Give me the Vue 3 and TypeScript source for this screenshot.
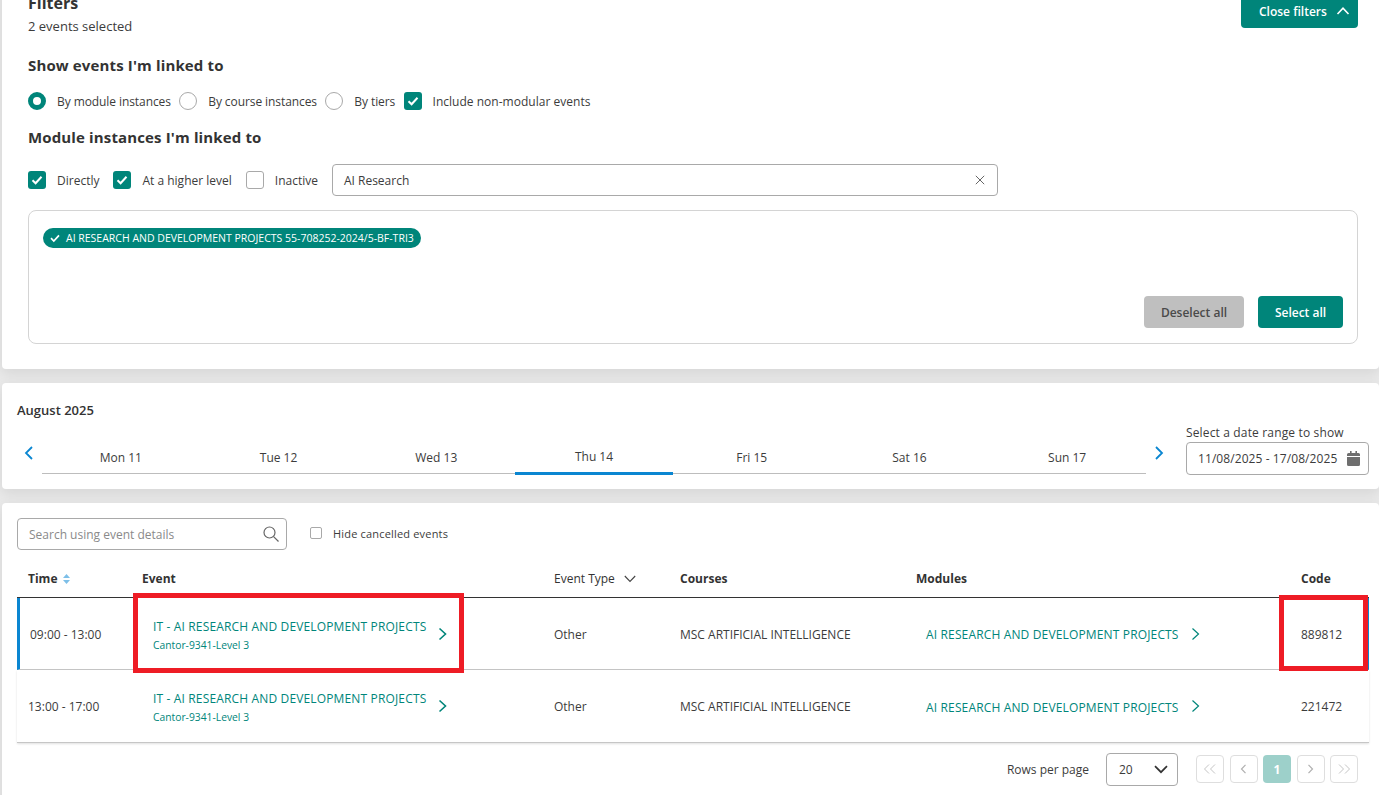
<script setup lang="ts">
interface Row { time: string; code: string; current: boolean }
const days = ['Mon 11', 'Tue 12', 'Wed 13', 'Thu 14', 'Fri 15', 'Sat 16', 'Sun 17']
const rows: Row[] = [
  { time: '09:00 - 13:00', code: '889812', current: true },
  { time: '13:00 - 17:00', code: '221472', current: false },
]
</script>

<template>
  <div class="page">
    <section class="panel filters">
      <div class="filters-head">
        <div>
          <h2 class="title">Filters</h2>
          <div class="count">2 events selected</div>
        </div>
        <button class="btn close-btn">
          Close filters
          <svg width="14" height="14" viewBox="0 0 14 14" fill="none" stroke="#fff" stroke-width="1.6"><path d="M1.5 10 7 4.2 12.5 10" /></svg>
        </button>
      </div>

      <h3 class="sub first">Show events I'm linked to</h3>
      <div class="options options-a">
        <label class="opt"><span class="radio on"></span>By module instances</label>
        <label class="opt"><span class="radio"></span>By course instances</label>
        <label class="opt"><span class="radio"></span>By tiers</label>
        <label class="opt wide">
          <span class="check on"><svg width="12" height="12" viewBox="0 0 12 12" fill="none" stroke="#fff" stroke-width="2"><path d="M1.5 6.2 4.6 9.2 10.5 2.8" /></svg></span>
          Include non-modular events
        </label>
      </div>

      <h3 class="sub second">Module instances I'm linked to</h3>
      <div class="options options-b">
        <label class="opt">
          <span class="check on"><svg width="12" height="12" viewBox="0 0 12 12" fill="none" stroke="#fff" stroke-width="2"><path d="M1.5 6.2 4.6 9.2 10.5 2.8" /></svg></span>
          Directly
        </label>
        <label class="opt">
          <span class="check on"><svg width="12" height="12" viewBox="0 0 12 12" fill="none" stroke="#fff" stroke-width="2"><path d="M1.5 6.2 4.6 9.2 10.5 2.8" /></svg></span>
          At a higher level
        </label>
        <label class="opt"><span class="check"></span>Inactive</label>
        <div class="module-search">
          <span>AI Research</span>
          <svg width="10" height="10" viewBox="0 0 10 10" fill="none" stroke="#666" stroke-width="1"><path d="M.8.8l8.4 8.4M9.2.8.8 9.2" /></svg>
        </div>
      </div>

      <div class="results">
        <div class="chip-row">
          <span class="chip">
            <svg width="10" height="10" viewBox="0 0 10 10" fill="none" stroke="#fff" stroke-width="1.7"><path d="M1 5.2 3.8 8 9 2.4" /></svg>
            AI RESEARCH AND DEVELOPMENT PROJECTS 55-708252-2024/5-BF-TRI3
          </span>
        </div>
        <div class="result-actions">
          <button class="btn muted">Deselect all</button>
          <button class="btn select">Select all</button>
        </div>
      </div>
    </section>

    <section class="panel calendar">
      <div class="month">August 2025</div>
      <div class="strip">
        <svg class="nav-icon" width="10" height="14" viewBox="0 0 10 14" fill="none" stroke="#0a86d1" stroke-width="1.8"><path d="M8 1 2 7l6 6" /></svg>
        <div class="days">
          <div v-for="d in days" :key="d" class="day" :class="{ active: d === 'Thu 14' }">{{ d }}</div>
        </div>
        <svg class="nav-icon next" width="10" height="14" viewBox="0 0 10 14" fill="none" stroke="#0a86d1" stroke-width="1.8"><path d="M2 1l6 6-6 6" /></svg>
        <div class="range">
          <div class="range-label">Select a date range to show</div>
          <div class="range-input">
            <span>11/08/2025 - 17/08/2025</span>
            <svg width="13" height="15" viewBox="0 0 13 15" fill="#6e6e6e"><path d="M3 0h1.6v2h3.8V0H10v2h1.5A1.5 1.5 0 0 1 13 3.5V5H0V3.5A1.5 1.5 0 0 1 1.5 2H3zM0 6h13v7.5a1.5 1.5 0 0 1-1.5 1.5h-10A1.5 1.5 0 0 1 0 13.500z" /></svg>
          </div>
        </div>
      </div>
    </section>

    <section class="panel events">
      <div class="toolbar">
        <div class="search">
          <span>Search using event details</span>
          <svg width="16" height="16" viewBox="0 0 16 16" fill="none" stroke="#666" stroke-width="1.2"><circle cx="6.500" cy="6.500" r="5.500" /><path d="m10.600 10.600 4.900 4.900" /></svg>
        </div>
        <label class="hide"><span class="mini-check"></span>Hide cancelled events</label>
      </div>

      <div class="table">
        <div class="grid head">
          <div class="th">Time
            <svg width="7" height="10" viewBox="0 0 7 10" fill="#7dbfe8"><path d="M3.500 0 7 4H0zM0 6h7l-3.500 4z" /></svg>
          </div>
          <div class="th">Event</div>
          <div class="th light">Event Type
            <svg width="12" height="8" viewBox="0 0 12 8" fill="none" stroke="#444" stroke-width="1.100"><path d="m.8 1 5.200 5.400L11.200 1" /></svg>
          </div>
          <div class="th">Courses</div>
          <div class="th">Modules</div>
          <div class="th">Code</div>
        </div>
        <div v-for="r in rows" :key="r.code" class="grid row" :class="{ current: r.current }">
          <div class="td time">{{ r.time }}</div>
          <div class="td event">
            <div class="event-text">
              <div class="link">IT - AI RESEARCH AND DEVELOPMENT PROJECTS</div>
              <div class="room">Cantor-9341-Level 3</div>
            </div>
            <svg class="chev" width="9" height="14" viewBox="0 0 9 14" fill="none" stroke="#00857a" stroke-width="1.600"><path d="m1.500 1.500 6 5.500-6 5.500" /></svg>
          </div>
          <div class="td plain">Other</div>
          <div class="td plain">MSC ARTIFICIAL INTELLIGENCE</div>
          <div class="td module">
            <span class="link">AI RESEARCH AND DEVELOPMENT PROJECTS</span>
            <svg class="chev" width="9" height="14" viewBox="0 0 9 14" fill="none" stroke="#00857a" stroke-width="1.200"><path d="m1.500 1.500 6 5.500-6 5.500" /></svg>
          </div>
          <div class="td plain">{{ r.code }}</div>
        </div>
      </div>

      <div class="pager">
        <span class="rows-label">Rows per page</span>
        <div class="rows-select">
          <span>20</span>
          <svg width="14" height="9" viewBox="0 0 14 9" fill="none" stroke="#333" stroke-width="1.700"><path d="m1 1.200 6 6 6-6" /></svg>
        </div>
        <div class="pages">
          <span class="pg"><svg width="14" height="10" viewBox="0 0 14 10" fill="none" stroke="#c4c4c4"><path d="M6 .5 1.500 5 6 9.500M12 .5 7.500 5 12 9.500" /></svg></span>
          <span class="pg"><svg width="7" height="10" viewBox="0 0 7 10" fill="none" stroke="#b0b0b0" stroke-width="1.200"><path d="M5.500.8 1.500 5l4 4.200" /></svg></span>
          <span class="pg cur">1</span>
          <span class="pg"><svg width="7" height="10" viewBox="0 0 7 10" fill="none" stroke="#b0b0b0" stroke-width="1.200"><path d="M1.500.8l4 4.200-4 4.200" /></svg></span>
          <span class="pg"><svg width="14" height="10" viewBox="0 0 14 10" fill="none" stroke="#c4c4c4"><path d="M2 .5 6.500 5 2 9.500M8 .5 12.500 5 8 9.500" /></svg></span>
        </div>
      </div>
    </section>

    <div class="mark mark-event"></div>
    <div class="mark mark-code"></div>
  </div>
</template>

<style>
html, body { margin: 0; background: #e9e9e9; }
</style>

<style scoped>
* { box-sizing: border-box; }
.page {
  position: relative;
  width: 1379px;
  height: 795px;
  overflow: hidden;
  background: #e9e9e9;
  font-family: "Open Sans", "Noto Sans", sans-serif;
  font-size: 12px;
  color: #3c3c3c;
}
.panel {
  margin-left: 2px;
  background: #fff;
  border-radius: 4px;
  box-shadow: 0 4px 14px rgba(0, 0, 0, .09);
}
.filters {
  height: 387px;
  margin-top: -18px;
  padding: 10px 21px 0 26px;
}
.filters-head { display: flex; justify-content: space-between; align-items: flex-start; }
.title { margin: 0; font-size: 16px; line-height: 22px; font-weight: 700; color: #333; }
.count { margin-top: 3px; font-size: 13px; line-height: 18px; }
.btn {
  border: 0;
  border-radius: 4px;
  font-family: inherit;
  font-size: 12px;
  font-weight: 600;
  color: #fff;
  background: #00857a;
}
.close-btn {
  display: flex;
  align-items: center;
  gap: 9px;
  width: 117px;
  height: 38px;
  margin-top: -2px;
  padding: 4px 0 0 18px;
}
.sub { margin: 0; font-size: 15px; line-height: 20px; font-weight: 700; color: #333; letter-spacing: .14px; }
.sub.first { margin-top: 20px; }
.sub.second { margin-top: 16px; }
.options { display: flex; align-items: center; }
.options-a { gap: 8.300px; margin-top: 16px; height: 20px; letter-spacing: -.08px; }
.opt.wide { letter-spacing: .02px; }
.options-b { gap: 14px; margin-top: 17px; height: 32px; }
.opt { display: flex; align-items: center; gap: 11px; white-space: nowrap; }
.radio, .check {
  flex: none;
  display: flex;
  align-items: center;
  justify-content: center;
  width: 18px;
  height: 18px;
  border: 1px solid #a9a9a9;
  background: #fff;
}
.radio { border-radius: 50%; }
.radio.on { border: 5px solid #00857a; }
.check { border-radius: 3px; }
.check.on { border: 0; background: #00857a; }
.module-search {
  display: flex;
  align-items: center;
  justify-content: space-between;
  width: 666px;
  height: 32px;
  padding: 0 12px 0 11px;
  border: 1px solid #a9a9a9;
  border-radius: 4px;
}
.results {
  position: relative;
  display: flex;
  flex-direction: column;
  justify-content: space-between;
  height: 134px;
  margin-top: 14px;
  padding: 17px 14px 15px;
  border: 1px solid #d4d4d4;
  border-radius: 8px;
}
.chip-row { display: flex; }
.chip {
  display: flex;
  align-items: center;
  gap: 6px;
  height: 20px;
  padding: 0 7px;
  border-radius: 10px;
  background: #00857a;
  color: #fff;
  font-size: 10.500px;
  white-space: nowrap;
}
.result-actions { display: flex; justify-content: flex-end; gap: 14px; }
.muted { width: 100px; height: 32px; background: #bfbfbf; color: #4a4a4a; }
.select { width: 85px; height: 32px; }
.calendar { height: 106px; margin-top: 14px; padding: 18px 10px 0 15px; }
.month { font-size: 13px; line-height: 18px; font-weight: 600; color: #333; }
.strip { display: flex; align-items: flex-end; margin-top: 6px; }
.nav-icon { flex: none; margin: 0 8px 14px 7px; }
.nav-icon.next { margin: 0 22px 14px 8px; }
.days {
  display: grid;
  grid-template-columns: repeat(7, 1fr);
  width: 1104px;
  border-bottom: 1px solid #bdbdbd;
}
.day { height: 33px; padding-top: 9px; text-align: center; line-height: 18px; }
.day.active { height: 35px; margin-bottom: -2px; padding-top: 8px; border-bottom: 3px solid #0a86d1; }
.range { flex: none; width: 183px; margin-bottom: -1px; }
.range-label { line-height: 16px; white-space: nowrap; margin-bottom: 1px; letter-spacing: .15px; }
.range-input {
  display: flex;
  align-items: center;
  justify-content: space-between;
  height: 33px;
  padding: 0 8px 0 11px;
  border: 1px solid #a9a9a9;
  border-radius: 4px;
  white-space: nowrap;
  letter-spacing: .08px;
}
.events { height: 330px; margin-top: 14px; padding: 15px 10px 0 15px; }
.toolbar { display: flex; align-items: center; gap: 23px; height: 32px; }
.search {
  display: flex;
  align-items: center;
  justify-content: space-between;
  width: 270px;
  height: 32px;
  padding: 0 7px 0 11px;
  border: 1px solid #a9a9a9;
  border-radius: 4px;
  color: #8a8a8a;
}
.hide { display: flex; align-items: center; gap: 11px; padding-bottom: 2px; font-size: 11px; letter-spacing: .18px; }
.mini-check { width: 12px; height: 12px; border: 1px solid #a9a9a9; border-radius: 2px; }
.table { margin-top: 10px; width: 1352px; }
.grid { display: grid; grid-template-columns: 114px 412px 126px 236px 385px 79px; align-items: center; }
.head { height: 38px; border-bottom: 1px solid #333; }
.th { display: flex; align-items: center; gap: 6px; padding-left: 11px; font-weight: 700; color: #333; }
.th.light { font-weight: 400; gap: 9px; }
.row { height: 72px; border-bottom: 1px solid #c6c6c6; position: relative; }
.row:last-child { height: 73px; box-shadow: 0 1px 2px rgba(0, 0, 0, .12); }
.row.current { border-left: 3px solid #0a86d1; border-right: 2px solid #0a86d1; grid-template-columns: 111px 412px 126px 236px 385px 77px; }
.td { padding-left: 11px; white-space: nowrap; }
.row.current .time { padding-left: 10px; padding-top: 2px; }
.row.current .plain { padding-top: 2px; }
.event { display: flex; align-items: center; padding-left: 22px; gap: 12px; }
.event-text { padding-top: 2px; }
.row.current .event-text { padding-top: 4px; }
.module { display: flex; align-items: center; padding-left: 21px; gap: 12px; }
.module .link { padding-top: 4px; }
.row.current .module .link { padding-top: 2px; }
.link { color: #00857a; line-height: 16px; letter-spacing: .15px; }
.room { margin-top: 3px; font-size: 10.300px; line-height: 14px; color: #00857a; }
.chev { flex: none; }
.pager { display: flex; align-items: center; justify-content: flex-end; height: 53px; width: 1352px; padding: 0 11px 1px 0; }
.rows-label { margin-right: 17px; }
.rows-select {
  display: flex;
  align-items: center;
  justify-content: space-between;
  width: 72px;
  height: 33px;
  padding: 0 9px 0 12px;
  border: 1px solid #a9a9a9;
  border-radius: 4px;
  margin-right: 18px;
}
.pages { display: flex; gap: 5.500px; }
.pg {
  display: flex;
  align-items: center;
  justify-content: center;
  width: 28px;
  height: 28px;
  border: 1px solid #dedede;
  border-radius: 4px;
}
.pg.cur { border: 0; background: #9dd0ca; color: #fff; font-weight: 700; }
.mark { position: absolute; border: 5px solid #ee1c25; pointer-events: none; }
.mark-event { left: 133px; top: 593px; width: 331px; height: 80px; }
.mark-code { left: 1279px; top: 595px; width: 89px; height: 76px; }
</style>
